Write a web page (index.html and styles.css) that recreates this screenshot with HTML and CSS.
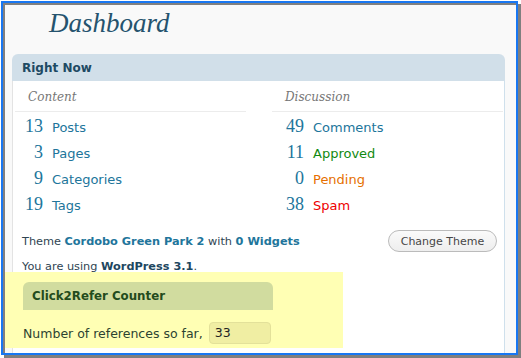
FILE: index.html
```html
<!DOCTYPE html>
<html>
<head>
<meta charset="utf-8">
<link rel="stylesheet" href="styles.css">
</head>
<body>
<div class="frame">
  <div class="page">
    <h1 class="title">Dashboard</h1>
    <div class="widget">
      <h3 class="widget-head">Right Now</h3>
      <div class="widget-body">
        <div class="tables">
          <div class="col col-content">
            <p class="sub">Content</p>
            <div class="rows">
              <div class="row"><span class="num">13</span><a class="lbl">Posts</a></div>
              <div class="row"><span class="num">3</span><a class="lbl">Pages</a></div>
              <div class="row"><span class="num">9</span><a class="lbl">Categories</a></div>
              <div class="row"><span class="num">19</span><a class="lbl">Tags</a></div>
            </div>
          </div>
          <div class="col col-discussion">
            <p class="sub">Discussion</p>
            <div class="rows">
              <div class="row"><span class="num">49</span><a class="lbl">Comments</a></div>
              <div class="row"><span class="num">11</span><a class="lbl approved">Approved</a></div>
              <div class="row"><span class="num">0</span><a class="lbl pending">Pending</a></div>
              <div class="row"><span class="num">38</span><a class="lbl spam">Spam</a></div>
            </div>
          </div>
        </div>
        <div class="versions">
          <div class="theme-line">
            <p class="theme-text">Theme <a class="strong-link">Cordobo Green Park 2</a> with <a class="strong-link">0 Widgets</a></p>
            <button class="btn">Change Theme</button>
          </div>
          <p class="wp">You are using <span class="bold">WordPress 3.1</span>.</p>
        </div>
        <div class="c2r">
          <div class="c2r-head">Click2Refer Counter</div>
          <div class="c2r-row"><span class="c2r-label">Number of references so far,</span><span class="c2r-input">33</span></div>
        </div>
      </div>
    </div>
  </div>
</div>
</body>
</html>
```
FILE: styles.css
```css
* { box-sizing: border-box; }
html, body { margin: 0; padding: 0; background: #ffffff; }
body { width: 521px; height: 358px; overflow: hidden; font-family: "DejaVu Sans", sans-serif; }

.frame {
  margin: 1px 0 0 1px;
  width: 517px;
  height: 354px;
  border: 2px solid #1877f2;
  box-shadow: 3px 3px 0 #7f7f7f;
}
.page {
  height: 100%;
  border-top: 2px solid #808080;
  border-left: 2px solid #808080;
  background: #f9f9f9;
  overflow: hidden;
}

.title {
  margin: 0;
  height: 49px;
  padding-left: 44px;
  font: italic 27px/36px "Liberation Serif", serif;
  font-weight: normal;
  color: #25536e;
}

.widget {
  margin-left: 7px;
  width: 493px;
}
.widget-head {
  margin: 0;
  height: 27px;
  padding-left: 10px;
  background: #d1dfe9;
  border-radius: 6px 6px 0 0;
  font: bold 12px/28px "DejaVu Sans", sans-serif;
  color: #1e4a63;
}
.widget-body {
  height: 300px;
  background: #ffffff;
  border-left: 1px solid #e3e3e3;
  border-right: 1px solid #cfe0ec;
}

.tables {
  display: flex;
  gap: 26px;
  padding: 0 1px 0 2px;
}
.col { width: 231px; }
.sub {
  margin: 0;
  height: 31px;
  padding-left: 13px;
  border-bottom: 1px solid #ececec;
  font: italic 12px/32px "DejaVu Serif", serif;
  color: #777777;
}
.rows { padding-top: 4px; }
.row {
  display: flex;
  align-items: baseline;
  height: 26px;
}
.num {
  width: 28px;
  margin-right: 9px;
  text-align: right;
  font: 18px/20px "Liberation Serif", serif;
  color: #21759b;
}
.col-discussion .num { width: 32px; }
.lbl {
  font: 13px/16px "DejaVu Sans", sans-serif;
  color: #21759b;
}
.lbl.approved { color: #118a11; }
.lbl.pending { color: #e66f00; }
.lbl.spam { color: #ee0000; }

.versions { padding: 0 7px 0 9px; }
.theme-line {
  display: flex;
  justify-content: space-between;
  align-items: baseline;
  margin-top: 10px;
}
.theme-text {
  margin: 0;
  font-size: 11.3px;
  color: #2f4552;
}
.strong-link { font-weight: bold; color: #21759b; }
.btn {
  width: 109px;
  height: 22px;
  padding: 0;
  border: 1px solid #bbbbbb;
  border-radius: 11px;
  background: linear-gradient(#fafafa, #eeeeee);
  font: 11px "DejaVu Sans", sans-serif;
  color: #464646;
}
.wp {
  margin: 7px 0 0 0;
  font-size: 11.3px;
  line-height: 16px;
  color: #2f4552;
}
.bold { font-weight: bold; color: #1d4760; }

.c2r {
  margin: -3px 0 0 -8px;
  width: 338px;
  height: 76px;
  padding: 10px 0 0 18px;
  background: #ffffb4;
}
.c2r-head {
  width: 250px;
  height: 28px;
  padding-left: 9px;
  background: #d1dc9f;
  border-radius: 6px 6px 0 0;
  font: bold 11.8px/28px "DejaVu Sans", sans-serif;
  color: #234b1c;
}
.c2r-row {
  display: flex;
  align-items: center;
  margin-top: 12px;
}
.c2r-label {
  font-size: 12.5px;
  color: #2c4331;
}
.c2r-input {
  margin-left: 6px;
  width: 62px;
  height: 22px;
  padding-left: 5px;
  background: #f0eea3;
  border: 1px solid #e3e19a;
  border-radius: 4px;
  font-size: 12.5px;
  line-height: 20px;
  color: #222222;
}
```
